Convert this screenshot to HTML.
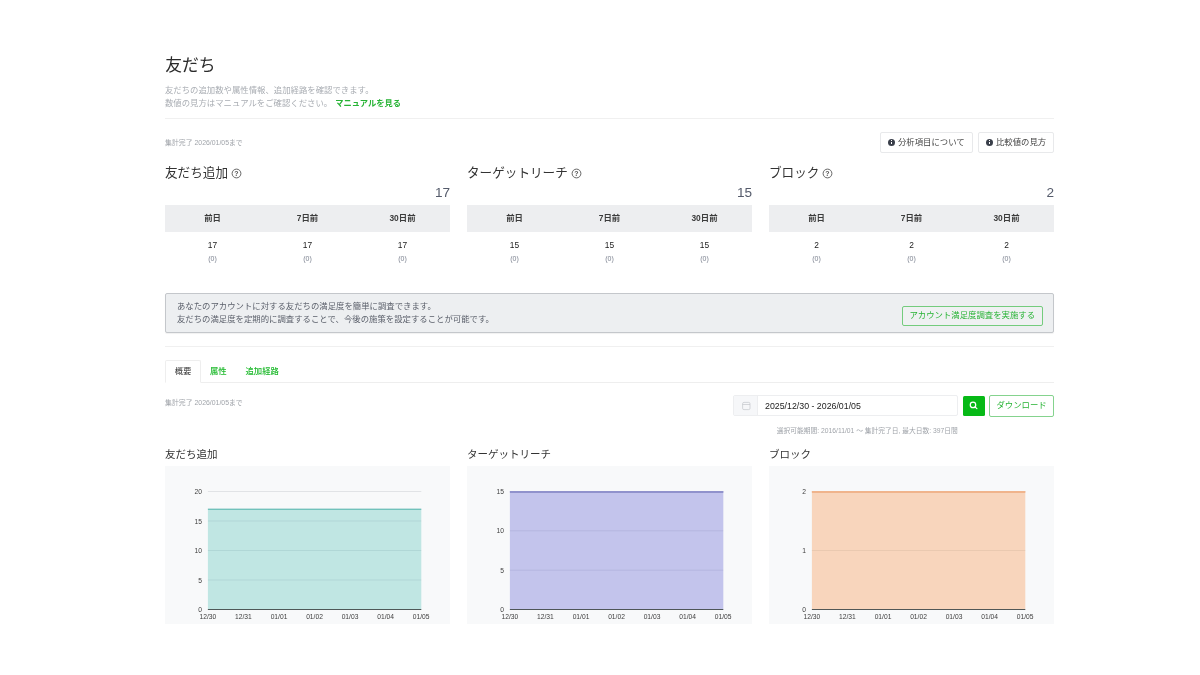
<!DOCTYPE html>
<html lang="ja">
<head>
<meta charset="utf-8">
<title>友だち</title>
<style>
*{box-sizing:border-box;margin:0;padding:0}
html,body{width:1200px;height:675px;background:#fff;overflow:hidden}
body{will-change:transform;font-family:"Liberation Sans","Noto Sans CJK JP",sans-serif;color:#333;position:relative;-webkit-font-smoothing:antialiased}
.abs{position:absolute;white-space:nowrap}
h1{position:absolute;left:165.3px;top:53.5px;font-size:16.8px;font-weight:400;color:#2b2b2b;line-height:24px;white-space:nowrap}
.desc{position:absolute;left:165px;top:83.5px;font-size:8.4px;line-height:13px;color:#a9adb3;white-space:nowrap}
.desc a{color:#27b335;font-weight:700;text-decoration:none;margin-left:3px;font-size:8.25px}
hr{position:absolute;left:165px;width:889px;height:1px;border:0;background:#f0f0f0}
.asof{position:absolute;left:165px;font-size:6.9px;color:#a0a4aa;line-height:10px;white-space:nowrap}
.btn{position:absolute;top:132px;height:20.5px;border:1px solid #e8e9eb;border-radius:2px;background:#fff;font-size:8.4px;color:#444;line-height:18.5px;white-space:nowrap;padding-left:17px}
.btn i{position:absolute;left:6.5px;top:5.5px;width:7.4px;height:7.4px;border-radius:50%;background:#3a3f4a;}
.btn i:before{content:"";position:absolute;left:3.2px;top:3.2px;width:1px;height:2.5px;background:#fff}
.btn i:after{content:"";position:absolute;left:3.2px;top:1.7px;width:1px;height:1px;background:#fff}
.panel{position:absolute;top:160px;width:285px;height:110px}
.panel h2{position:absolute;left:0;top:3px;font-size:12.6px;font-weight:400;color:#333;line-height:20px;white-space:nowrap}
.panel h2 svg{position:absolute;right:-14px;top:5px}
.panel .big{position:absolute;right:0;top:24px;font-size:13.6px;line-height:18px;color:#555b6b}
.panel table{position:absolute;left:0;top:45px;width:285px;border-collapse:collapse;table-layout:fixed}
.panel th{height:27px;padding-bottom:2.5px;background:#edeef0;font-size:8.4px;font-weight:700;color:#3c3c3c;text-align:center;vertical-align:middle}
.panel td{text-align:center;vertical-align:top;padding-top:7.5px;font-size:8.4px;color:#222;line-height:11px}
.panel td small{display:block;font-size:7px;color:#7c8290;line-height:10px;margin-top:3px}
.notice{position:absolute;left:165px;top:293px;width:889px;height:40px;border:1px solid #c4c7cb;border-radius:2px;background:#edeff1;box-shadow:0 1px 1px rgba(0,0,0,.06);font-size:8.4px;line-height:13.5px;color:#5a5f6a;padding:5.5px 0 0 11px;white-space:nowrap}
.notice a{position:absolute;right:10.5px;top:11.5px;height:20px;width:140.5px;border:1px solid #74cc7d;border-radius:2px;background:#eff1f2;color:#27b335;text-align:center;line-height:17.5px;text-decoration:none}
.tabs{position:absolute;left:165px;top:360px;width:889px;height:23px;border-bottom:1px solid #eee;list-style:none;font-size:8.4px}
.tabs li{position:absolute;top:0;height:23px;line-height:22px;color:#1db92b;font-weight:500;white-space:nowrap}
.tabs li.on{left:0;width:36px;line-height:20.5px;border:1px solid #eee;border-bottom:1px solid #fff;color:#333;font-weight:400;text-align:center;background:#fff;border-radius:2px 2px 0 0}
.range{position:absolute;left:733px;top:395px;height:21px;width:225px;border:1px solid #edeef0;border-radius:2px;background:#fff}
.range .ic{position:absolute;left:0;top:0;width:24px;height:19px;background:#f6f7f9;border-right:1px solid #edeef0}
.range .tx{position:absolute;left:31px;top:0;font-size:8.8px;line-height:20.5px;color:#222;white-space:nowrap}
.search{position:absolute;left:962.7px;top:396px;width:22px;height:20px;background:#06b916;border-radius:1.5px}
.dl{position:absolute;left:989.3px;top:395px;width:64.5px;height:21.5px;border:1px solid #85d38e;border-radius:2px;color:#27b335;font-size:8.4px;line-height:19px;text-align:center;white-space:nowrap}
.note{position:absolute;left:776.8px;top:426px;font-size:6.75px;line-height:10px;color:#a0a4aa;white-space:nowrap}
.chart{position:absolute;top:447px;width:285px}
.chart h3{font-size:10.5px;font-weight:400;color:#333;line-height:15px;height:19px;white-space:nowrap}
.chart svg{display:block;background:#f8f9fa}
.chart text{font-family:"Liberation Sans",sans-serif;font-size:6.7px;fill:#3c3c3c}
</style>
</head>
<body>
<h1>友だち</h1>
<p class="desc">友だちの追加数や属性情報、追加経路を確認できます。<br>数値の見方はマニュアルをご確認ください。<a>マニュアルを見る</a></p>
<hr style="top:118px">
<div class="asof" style="top:137.5px">集計完了 2026/01/05まで</div>
<div class="btn" style="left:880px;width:92.5px"><i></i>分析項目について</div>
<div class="btn" style="left:978px;width:76px"><i></i>比較値の見方</div>

<section class="panel" style="left:165px">
<h2>友だち追加<svg width="11" height="11" viewBox="0 0 11 11"><circle cx="5.5" cy="5.5" r="4.4" fill="none" stroke="#555" stroke-width="0.9"/><text x="5.5" y="8" font-size="7" font-weight="700" text-anchor="middle" fill="#555" font-family="Liberation Sans,sans-serif">?</text></svg></h2>
<div class="big">17</div>
<table><tr><th>前日</th><th>7日前</th><th>30日前</th></tr><tr><td>17<small>(0)</small></td><td>17<small>(0)</small></td><td>17<small>(0)</small></td></tr></table>
</section>
<section class="panel" style="left:467px">
<h2>ターゲットリーチ<svg width="11" height="11" viewBox="0 0 11 11"><circle cx="5.5" cy="5.5" r="4.4" fill="none" stroke="#555" stroke-width="0.9"/><text x="5.5" y="8" font-size="7" font-weight="700" text-anchor="middle" fill="#555" font-family="Liberation Sans,sans-serif">?</text></svg></h2>
<div class="big">15</div>
<table><tr><th>前日</th><th>7日前</th><th>30日前</th></tr><tr><td>15<small>(0)</small></td><td>15<small>(0)</small></td><td>15<small>(0)</small></td></tr></table>
</section>
<section class="panel" style="left:769px">
<h2>ブロック<svg width="11" height="11" viewBox="0 0 11 11"><circle cx="5.5" cy="5.5" r="4.4" fill="none" stroke="#555" stroke-width="0.9"/><text x="5.5" y="8" font-size="7" font-weight="700" text-anchor="middle" fill="#555" font-family="Liberation Sans,sans-serif">?</text></svg></h2>
<div class="big">2</div>
<table><tr><th>前日</th><th>7日前</th><th>30日前</th></tr><tr><td>2<small>(0)</small></td><td>2<small>(0)</small></td><td>2<small>(0)</small></td></tr></table>
</section>

<div class="notice">あなたのアカウントに対する友だちの満足度を簡単に調査できます。<br>友だちの満足度を定期的に調査することで、今後の施策を設定することが可能です。<a>アカウント満足度調査を実施する</a></div>
<hr style="top:346px">
<ul class="tabs"><li class="on">概要</li><li style="left:45px">属性</li><li style="left:80.5px">追加経路</li></ul>
<div class="asof" style="top:397.5px">集計完了 2026/01/05まで</div>

<div class="range"><span class="ic"><svg width="24" height="19" viewBox="0 0 24 19"><rect x="8.6" y="6.4" width="7.4" height="7.2" rx="1.3" fill="none" stroke="#bfc2c7" stroke-width="0.65"/><line x1="8.6" y1="8.5" x2="16" y2="8.5" stroke="#bfc2c7" stroke-width="0.65"/></svg></span><span class="tx">2025/12/30 - 2026/01/05</span></div>
<div class="search"><svg width="22" height="20.5" viewBox="0 0 22 20.5"><circle cx="10" cy="8.9" r="2.75" fill="none" stroke="#fff" stroke-width="1.2"/><line x1="12.1" y1="11" x2="13.9" y2="12.6" stroke="#fff" stroke-width="1.2" stroke-linecap="round"/></svg></div>
<div class="dl">ダウンロード</div>
<div class="note">選択可能期間: 2016/11/01 ～ 集計完了日, 最大日数: 397日間</div>

<section class="chart" style="left:165px">
<h3>友だち追加</h3>
<svg width="285" height="157.5" viewBox="0 0 285 157.5">
<g stroke="#e1e3e6" stroke-width="1"><line x1="42.9" x2="256.3" y1="25.5" y2="25.5"/><line x1="42.9" x2="256.3" y1="55" y2="55"/><line x1="42.9" x2="256.3" y1="84.5" y2="84.5"/><line x1="42.9" x2="256.3" y1="114" y2="114"/></g>
<rect x="42.9" y="43.2" width="213.4" height="100.3" fill="#4cbfb3" fill-opacity="0.32"/>
<line x1="42.9" x2="256.3" y1="43.2" y2="43.2" stroke="#3aa9a0" stroke-width="0.9"/>
<line x1="42.9" x2="256.3" y1="143.5" y2="143.5" stroke="#3d4646" stroke-width="0.9"/>
<g text-anchor="end"><text x="37" y="28.1">20</text><text x="37" y="57.6">15</text><text x="37" y="87.1">10</text><text x="37" y="116.6">5</text><text x="37" y="146.1">0</text></g>
<g text-anchor="middle"><text x="42.9" y="153.3">12/30</text><text x="78.4" y="153.3">12/31</text><text x="114.0" y="153.3">01/01</text><text x="149.5" y="153.3">01/02</text><text x="185.0" y="153.3">01/03</text><text x="220.6" y="153.3">01/04</text><text x="256.1" y="153.3">01/05</text></g>
</svg>
</section>
<section class="chart" style="left:467px">
<h3>ターゲットリーチ</h3>
<svg width="285" height="157.5" viewBox="0 0 285 157.5">
<g stroke="#e1e3e6" stroke-width="1"><line x1="42.9" x2="256.3" y1="25.5" y2="25.5"/><line x1="42.9" x2="256.3" y1="64.8" y2="64.8"/><line x1="42.9" x2="256.3" y1="104.2" y2="104.2"/></g>
<rect x="42.9" y="25" width="213.4" height="118.5" fill="#6b6fd6" fill-opacity="0.38"/>
<line x1="42.9" x2="256.3" y1="26" y2="26" stroke="#9092cc" stroke-width="2"/>
<line x1="42.9" x2="256.3" y1="143.5" y2="143.5" stroke="#3d4646" stroke-width="0.9"/>
<g text-anchor="end"><text x="37" y="28.1">15</text><text x="37" y="67.4">10</text><text x="37" y="106.8">5</text><text x="37" y="146.1">0</text></g>
<g text-anchor="middle"><text x="42.9" y="153.3">12/30</text><text x="78.4" y="153.3">12/31</text><text x="114.0" y="153.3">01/01</text><text x="149.5" y="153.3">01/02</text><text x="185.0" y="153.3">01/03</text><text x="220.6" y="153.3">01/04</text><text x="256.1" y="153.3">01/05</text></g>
</svg>
</section>
<section class="chart" style="left:769px">
<h3>ブロック</h3>
<svg width="285" height="157.5" viewBox="0 0 285 157.5">
<g stroke="#e1e3e6" stroke-width="1"><line x1="42.9" x2="256.3" y1="25.5" y2="25.5"/><line x1="42.9" x2="256.3" y1="84.5" y2="84.5"/></g>
<rect x="42.9" y="25" width="213.4" height="118.5" fill="#f9a567" fill-opacity="0.42"/>
<line x1="42.9" x2="256.3" y1="26" y2="26" stroke="#f0b48c" stroke-width="2"/>
<line x1="42.9" x2="256.3" y1="143.5" y2="143.5" stroke="#3d4646" stroke-width="0.9"/>
<g text-anchor="end"><text x="37" y="28.1">2</text><text x="37" y="87.1">1</text><text x="37" y="146.1">0</text></g>
<g text-anchor="middle"><text x="42.9" y="153.3">12/30</text><text x="78.4" y="153.3">12/31</text><text x="114.0" y="153.3">01/01</text><text x="149.5" y="153.3">01/02</text><text x="185.0" y="153.3">01/03</text><text x="220.6" y="153.3">01/04</text><text x="256.1" y="153.3">01/05</text></g>
</svg>
</section>
</body>
</html>
